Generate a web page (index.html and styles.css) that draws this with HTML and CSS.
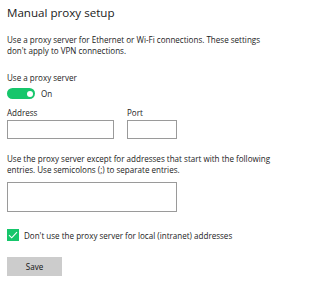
FILE: index.html
```html
<!DOCTYPE html>
<html>
<head>
<meta charset="utf-8">
<link rel="stylesheet" href="styles.css">
</head>
<body>
<div class="page">
  <h1 class="title">Manual proxy setup</h1>
  <p class="desc">Use a proxy server for Ethernet or Wi-Fi connections. These settings don't apply to VPN connections.</p>
  <div class="label">Use a proxy server</div>
  <div class="toggle-row">
    <span class="toggle"><span class="knob"></span></span>
    <span class="toggle-text">On</span>
  </div>
  <div class="fields">
    <div class="field">
      <div class="flabel">Address</div>
      <div class="input addr"></div>
    </div>
    <div class="field">
      <div class="flabel">Port</div>
      <div class="input port"></div>
    </div>
  </div>
  <p class="desc desc2">Use the proxy server except for addresses that start with the following entries. Use semicolons (;) to separate entries.</p>
  <div class="textarea"></div>
  <div class="check-row">
    <span class="check"><svg width="10" height="8" viewBox="0 0 10 8"><path d="M1 4.2 L3.7 6.8 L9 1.2" fill="none" stroke="#fff" stroke-width="1.1"/></svg></span>
    <span class="check-text">Don't use the proxy server for local (intranet) addresses</span>
  </div>
  <div class="btn">Save</div>
</div>
</body>
</html>
```
FILE: styles.css
```css
html, body {
  margin: 0;
  padding: 0;
  background: #fff;
}
.page {
  padding: 6px 7px 0 7px;
  font-family: "Open Sans", "Noto Sans", sans-serif;
  color: #222;
  font-size: 8.05px;
}
.title {
  margin: 0;
  font-size: 11.6px;
  font-weight: 400;
  line-height: 14px;
  color: #1a1a1a;
}
.desc {
  margin: 14px 0 0 0;
  line-height: 11px;
  width: 270px;
}
.label {
  margin-top: 16px;
  line-height: 11px;
}
.toggle-row {
  display: flex;
  align-items: center;
  gap: 6px;
  margin-top: 5px;
}
.toggle {
  width: 28px;
  height: 11px;
  border-radius: 5.5px;
  background: #16c66b;
  display: flex;
  align-items: center;
  justify-content: flex-end;
  padding-right: 2px;
  box-sizing: border-box;
}
.knob {
  width: 6px;
  height: 6px;
  border-radius: 50%;
  background: #fff;
}
.fields {
  display: flex;
  gap: 13px;
  margin-top: 8px;
}
.flabel {
  line-height: 11px;
}
.input {
  height: 19px;
  border: 1px solid #9a9a9a;
  box-sizing: border-box;
  margin-top: 2px;
}
.addr { width: 107px; }
.port { width: 50px; }
.desc2 {
  margin-top: 14px;
}
.textarea {
  width: 170px;
  height: 30px;
  border: 1px solid #9a9a9a;
  box-sizing: border-box;
  margin-top: 7px;
}
.check-row {
  display: flex;
  align-items: center;
  gap: 5px;
  margin-top: 17px;
}
.check {
  width: 12px;
  height: 12px;
  background: #16c66b;
  display: flex;
  align-items: center;
  justify-content: center;
}
.btn {
  width: 55px;
  height: 19px;
  background: #cccccc;
  margin-top: 16px;
  display: flex;
  align-items: center;
  justify-content: center;
  color: #111;
}
```
